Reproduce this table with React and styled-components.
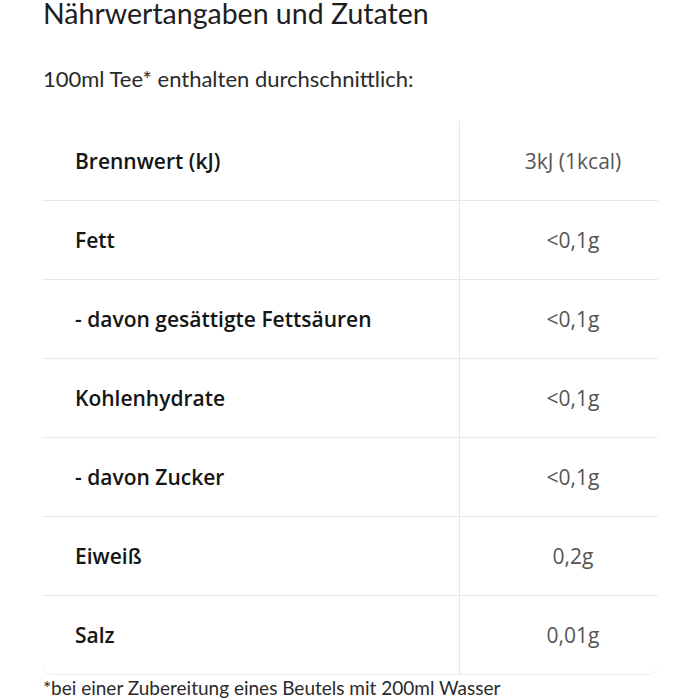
import React from "react";
import styled, { createGlobalStyle } from "styled-components";

const Global = createGlobalStyle`
  html, body { margin: 0; padding: 0; background: #fff; }
  body { font-family: Lato, "Open Sans", sans-serif; color: #1c1c1c; }
`;

const Page = styled.div`
  width: 700px;
  height: 700px;
  overflow: hidden;
  padding-left: 42px;
  box-sizing: border-box;
`;

const Title = styled.h1`
  margin: -5px 0 0 1px;
  font-family: Lato, sans-serif;
  font-weight: 400;
  font-size: 28.5px;
  line-height: 36px;
  color: #1e1e1e;
`;

const Intro = styled.p`
  margin: 35px 0 0 1px;
  font-family: Lato, sans-serif;
  font-size: 22px;
  line-height: 26px;
  color: #2a2a2a;
`;

const Table = styled.div`
  margin-top: 29px;
  width: 616px;
  display: grid;
  grid-template-columns: 418px 198px;
  border-bottom: 1px solid #ececec;
  border-radius: 0 0 10px 10px;
`;

const Label = styled.div`
  height: 79px;
  display: flex;
  align-items: center;
  padding-left: 33px;
  font-family: "Open Sans", sans-serif;
  font-weight: 600;
  font-size: 21px;
  color: #151515;
  border-top: ${(p) => (p.$first ? "none" : "1px solid #e9e9e9")};
  border-right: 1px solid #e6e6e6;
  box-sizing: border-box;
`;

const Value = styled.div`
  height: 79px;
  display: flex;
  align-items: center;
  justify-content: center;
  padding-left: 28px;
  font-family: "Open Sans", sans-serif;
  font-size: 21px;
  color: #555;
  border-top: ${(p) => (p.$first ? "none" : "1px solid #e9e9e9")};
  box-sizing: border-box;
`;

const Foot = styled.p`
  margin: 3px 0 0 1px;
  font-family: Lato, sans-serif;
  font-size: 19px;
  line-height: 20px;
  color: #2a2a2a;
`;

const rows = [
  ["Brennwert (kJ)", "3kJ (1kcal)"],
  ["Fett", "<0,1g"],
  ["- davon gesättigte Fettsäuren", "<0,1g"],
  ["Kohlenhydrate", "<0,1g"],
  ["- davon Zucker", "<0,1g"],
  ["Eiweiß", "0,2g"],
  ["Salz", "0,01g"],
];

export default function App() {
  return (
    <Page>
      <Global />
      <Title>Nährwertangaben und Zutaten</Title>
      <Intro>100ml Tee* enthalten durchschnittlich:</Intro>
      <Table>
        {rows.map(([l, v], i) => (
          <React.Fragment key={l}>
            <Label $first={i === 0}>{l}</Label>
            <Value $first={i === 0}>{v}</Value>
          </React.Fragment>
        ))}
      </Table>
      <Foot>*bei einer Zubereitung eines Beutels mit 200ml Wasser</Foot>
    </Page>
  );
}
